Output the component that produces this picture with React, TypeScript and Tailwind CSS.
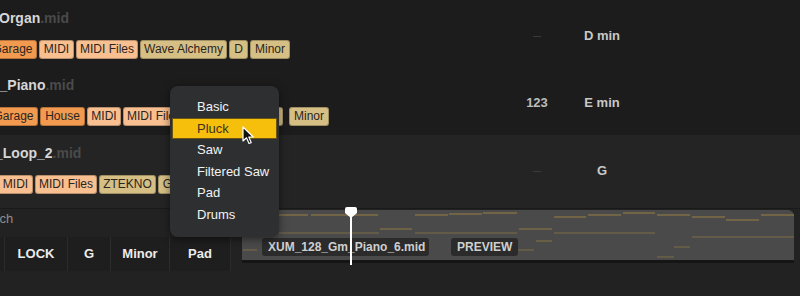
import React from "react";

const DARK = "bg-[#f29a4f]";
const LIGHT = "bg-[#f8bf90]";
const TAN = "bg-[#d6bf85]";

type Tag = { t: string; c: string; w: number; ml?: number };

function Tags({ tags }: { tags: Tag[] }) {
  return (
    <div className="flex gap-[2px] mt-[13px] whitespace-nowrap">
      {tags.map((tg, i) => (
        <div
          key={i}
          className={`${tg.c} h-[19px] shrink-0 rounded-[3px] border border-[#00000040] text-[#2b2520] text-[12px] leading-[17px] text-center overflow-hidden`}
          style={{ width: tg.w, marginLeft: tg.ml ?? 0 }}
        >
          {tg.t}
        </div>
      ))}
    </div>
  );
}

function Row({
  name,
  nameMl,
  tags,
  col1,
  col1Dim,
  col2,
  h,
  bg,
}: {
  name: string;
  nameMl: number;
  tags: Tag[];
  col1: string;
  col1Dim?: boolean;
  col2: string;
  h: string;
  bg: string;
}) {
  return (
    <div className={`flex ${h} ${bg}`}>
      <div className="w-[507px] shrink-0 flex flex-col">
        <div
          className="mt-[9px] text-[14px] leading-[18px] font-bold text-[#d6d6d6] whitespace-nowrap"
          style={{ marginLeft: nameMl }}
        >
          {name}
          <span className="text-[#4a4a4a]">.mid</span>
        </div>
        <Tags tags={tags} />
      </div>
      <div className="w-[60px] shrink-0 flex items-start pt-[27px] justify-center text-[13px] leading-[18px] font-bold">
        {col1Dim ? (
          <span className="block w-[8px] h-[1px] mt-[9px] bg-[#3a3a3a]" />
        ) : (
          <span className="text-[#bdbdbd]">{col1}</span>
        )}
      </div>
      <div className="w-[70px] shrink-0 flex items-start pt-[27px] justify-center text-[13px] leading-[18px] font-bold text-[#c8c8c8]">
        {col2}
      </div>
    </div>
  );
}

const lines: [number, number, number, number][] = [
  [279, 308, 215, 0.85],
  [311, 378, 215, 0.85],
  [415, 448, 215, 0.85],
  [449, 482, 214, 0.85],
  [483, 517, 213, 0.85],
  [554, 586, 217, 0.85],
  [588, 621, 215, 0.85],
  [623, 655, 213, 0.85],
  [657, 690, 215, 0.85],
  [692, 725, 217, 0.85],
  [726, 759, 220, 0.85],
  [761, 794, 215, 0.85],
  [380, 412, 229, 0.75],
  [519, 552, 229, 0.75],
  [279, 379, 233, 0.55],
  [415, 517, 233, 0.55],
  [554, 655, 233, 0.55],
  [692, 794, 237, 0.55],
  [536, 552, 241, 0.65],
  [674, 690, 247, 0.55],
  [243, 257, 250, 0.55],
  [517, 534, 250, 0.55],
  [657, 674, 257, 0.55],
];

export default function App() {
  const font = { fontFamily: '"Liberation Sans", Arial, Helvetica, sans-serif' };
  return (
    <div
      className="relative w-[800px] h-[296px] overflow-hidden bg-[#1c1c1c] text-white"
      style={font}
    >
      <Row
        name="Organ"
        nameMl={-1}
        h="h-[67px]"
        bg="bg-[#1c1c1c]"
        col1=""
        col1Dim
        col2="D min"
        tags={[
          { t: "Garage", c: DARK, w: 49, ml: -12 },
          { t: "MIDI", c: LIGHT, w: 35 },
          { t: "MIDI Files", c: LIGHT, w: 62 },
          { t: "Wave Alchemy", c: TAN, w: 87 },
          { t: "D", c: TAN, w: 19 },
          { t: "Minor", c: TAN, w: 40 },
        ]}
      />
      <Row
        name="n_Piano"
        nameMl={-9}
        h="h-[68px]"
        bg="bg-[#1c1c1c]"
        col1="123"
        col2="E min"
        tags={[
          { t: "Garage", c: DARK, w: 49, ml: -11 },
          { t: "House", c: DARK, w: 45 },
          { t: "MIDI", c: LIGHT, w: 34 },
          { t: "MIDI Files", c: LIGHT, w: 62 },
          { t: "Wave Alchemy", c: TAN, w: 75 },
          { t: "E", c: TAN, w: 19 },
          { t: "Minor", c: TAN, w: 40, ml: 4 },
        ]}
      />
      <Row
        name="_Loop_2"
        nameMl={-5}
        h="h-[73px]"
        bg="bg-[#242424]"
        col1=""
        col1Dim
        col2="G"
        tags={[
          { t: "MIDI", c: LIGHT, w: 35, ml: -2 },
          { t: "MIDI Files", c: LIGHT, w: 62 },
          { t: "ZTEKNO", c: TAN, w: 57 },
          { t: "G", c: TAN, w: 19 },
          { t: "Minor", c: TAN, w: 40 },
        ]}
      />

      {/* bottom section */}
      <div className="flex h-[88px] bg-[#222222] border-t border-[#1a1a1a]">
        <div className="w-[242px] shrink-0 flex flex-col">
          <div className="h-[28px] flex items-start pt-[2px]">
            <span className="ml-[-28px] text-[13px] leading-[16px] text-[#8f8f8f] whitespace-nowrap">
              Search
            </span>
          </div>
          <div className="h-[34px] flex bg-[#1e1e1e] text-[13px] font-bold text-[#ececec] w-[231px]">
            <div className="w-[5px] border-r border-[#2c2c2c]" />
            <div className="w-[63px] border-r border-[#2c2c2c] flex items-center justify-center">
              LOCK
            </div>
            <div className="w-[43px] border-r border-[#2c2c2c] flex items-center justify-center">
              G
            </div>
            <div className="w-[59px] border-r border-[#2c2c2c] flex items-center justify-center">
              Minor
            </div>
            <div className="w-[61px] border-r border-[#2c2c2c] flex items-center justify-center">
              Pad
            </div>
          </div>
        </div>
        <div className="flex-1 pt-[1px] pr-[6px]">
          <div className="relative h-[53px] bg-[#4a4a4a] rounded-tr-[6px] border-b-[3px] border-[#151515] flex flex-col justify-end pb-[4px]">
            <svg
              className="absolute left-0 top-0"
              width="552"
              height="50"
              viewBox="242 210 552 50"
            >
              {lines.map(([x1, x2, y, o], i) => (
                <line
                  key={i}
                  x1={x1}
                  x2={x2}
                  y1={y}
                  y2={y}
                  stroke="#8a7645"
                  strokeWidth="1.5"
                  opacity={o}
                />
              ))}
            </svg>
            <div className="relative flex gap-[22px] pl-[20px]">
              <div className="h-[18px] px-[6px] rounded-[3px] bg-[#2b2b2b] text-[12px] leading-[18px] font-bold text-[#cfcfcf] w-[167px] text-center">
                XUM_128_Gm_Piano_6.mid
              </div>
              <div className="h-[18px] px-[6px] rounded-[3px] bg-[#2b2b2b] text-[12px] leading-[18px] font-bold text-[#cfcfcf]">
                PREVIEW
              </div>
            </div>
            <div className="absolute left-[108px] top-[7px] w-[2px] h-[48px] bg-white" />
            <svg className="absolute left-[103px] top-[-3px]" width="12" height="11" viewBox="0 0 12 11">
              <path d="M2 0 H10 A2 2 0 0 1 12 2 V6 L6 11 L0 6 V2 A2 2 0 0 1 2 0 Z" fill="#ffffff" />
            </svg>
          </div>
        </div>
      </div>

      {/* dropdown menu */}
      <div className="absolute left-[170px] top-[86px] w-[109px] h-[151px] rounded-[8px] bg-[#2e2f31] shadow-[0_2px_8px_rgba(0,0,0,0.5)] pt-[10px] px-[2px]">
        {["Basic", "Pluck", "Saw", "Filtered Saw", "Pad", "Drums"].map((it) => (
          <div
            key={it}
            className={`h-[21.6px] flex items-center text-[13px] ${
              it === "Pluck"
                ? "bg-[#f5bf0c] text-[#3a3220] border border-[#6b5512] pl-[24px]"
                : "text-[#f2f2f2] pl-[25px]"
            }`}
          >
            {it}
          </div>
        ))}
      </div>

      {/* cursor */}
      <svg className="absolute left-[242px] top-[126px]" width="14" height="20" viewBox="0 0 14 20">
        <path
          d="M1 1 L1 15 L4.5 11.8 L7 17.5 L9.2 16.6 L6.8 11 L11.3 11 Z"
          fill="#111"
          stroke="#fff"
          strokeWidth="1.2"
          strokeLinejoin="round"
        />
      </svg>
    </div>
  );
}
